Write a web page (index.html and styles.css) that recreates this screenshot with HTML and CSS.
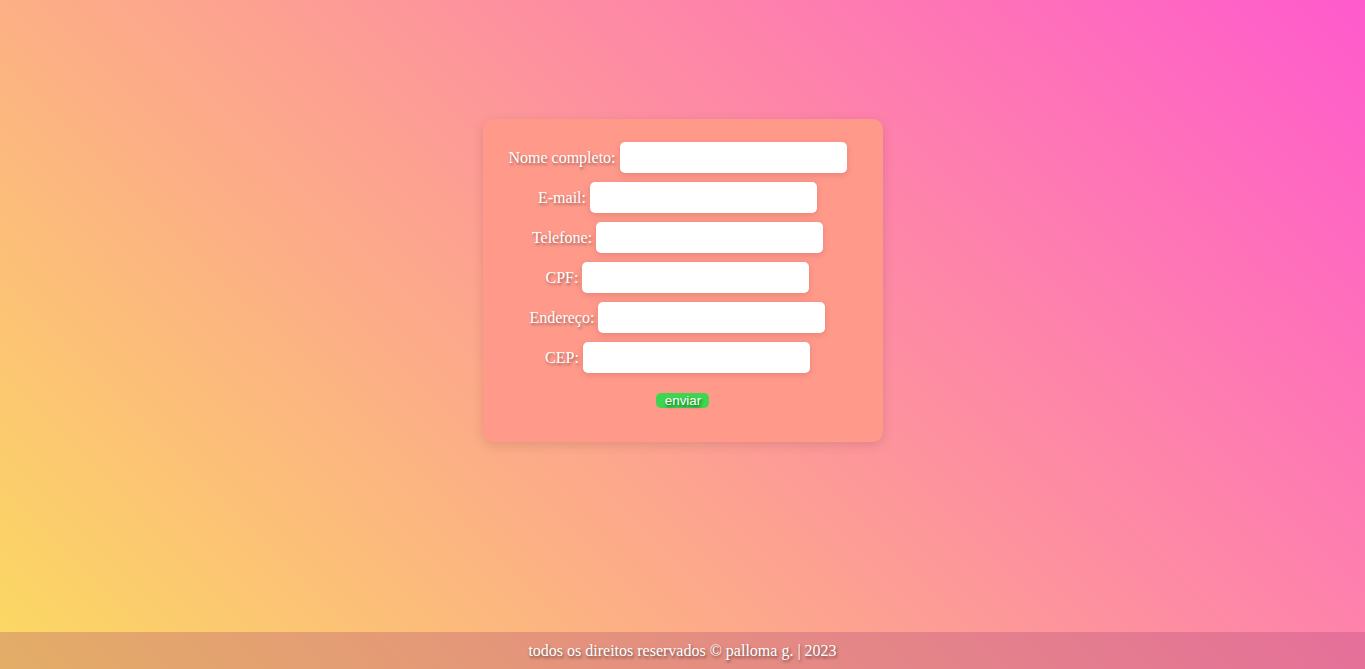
FILE: index.html
```html
<!DOCTYPE html>
<html lang="pt-BR">
<head>
<meta charset="utf-8">
<title>Formulário</title>
<link rel="stylesheet" href="styles.css">
</head>
<body>
<main class="main">
  <form class="card">
    <div class="row"><label class="label" for="nome">Nome completo:</label><input class="field" id="nome" type="text"></div>
    <div class="row"><label class="label" for="email">E-mail:</label><input class="field" id="email" type="email"></div>
    <div class="row"><label class="label" for="tel">Telefone:</label><input class="field" id="tel" type="tel"></div>
    <div class="row"><label class="label" for="cpf">CPF:</label><input class="field" id="cpf" type="text"></div>
    <div class="row"><label class="label" for="end">Endereço:</label><input class="field" id="end" type="text"></div>
    <div class="row"><label class="label" for="cep">CEP:</label><input class="field" id="cep" type="text"></div>
    <div class="actions"><button class="btn" type="button">enviar</button></div>
  </form>
</main>
<footer class="footer">todos os direitos reservados © palloma g. | 2023</footer>
</body>
</html>
```
FILE: styles.css
```css
html, body {
  margin: 0;
  padding: 0;
}
body {
  min-height: 100vh;
  display: flex;
  flex-direction: column;
  background-color: #FBDA61;
  background-image: linear-gradient(45deg, #FBDA61 0%, #FF5ACD 100%);
  font-family: "Liberation Serif", "Times New Roman", serif;
  font-size: 16px;
  color: #fff;
}
.main {
  flex: 1;
  display: flex;
  justify-content: center;
  align-items: flex-start;
  padding-top: 119px;
}
.card {
  width: 400px;
  box-sizing: border-box;
  padding: 23px 0 34px;
  background: #ff9a8b;
  border-radius: 10px;
  box-shadow: 0 3px 12px rgba(0, 0, 0, 0.12);
  display: flex;
  flex-direction: column;
  gap: 9px;
}
.row {
  display: flex;
  justify-content: center;
  align-items: center;
  gap: 4px;
  padding-right: 10px;
}
.label {
  text-shadow: 1px 2px 3px rgba(0, 0, 0, 0.4);
  white-space: nowrap;
}
.field {
  width: 227px;
  height: 31px;
  box-sizing: border-box;
  border: none;
  border-radius: 5px;
  background: #fff;
  box-shadow: 0 2px 6px rgba(160, 60, 60, 0.25);
  padding: 0 6px;
  outline: none;
}
.actions {
  display: flex;
  justify-content: center;
  margin-top: 11px;
}
.btn {
  border: none;
  background: #3ed650;
  color: #fff;
  font-family: "Liberation Sans", Arial, sans-serif;
  font-size: 13.333px;
  line-height: 15px;
  height: 15px;
  padding: 0 8px 0 9px;
  border-radius: 5px;
  text-shadow: 1px 2px 3px rgba(0, 50, 0, 0.8);
  cursor: pointer;
}
.footer {
  height: 37px;
  display: flex;
  align-items: center;
  justify-content: center;
  background: rgba(172, 68, 116, 0.3);
  text-shadow: 1px 2px 3px rgba(0, 0, 0, 0.5);
  font-size: 16px;
}
```
